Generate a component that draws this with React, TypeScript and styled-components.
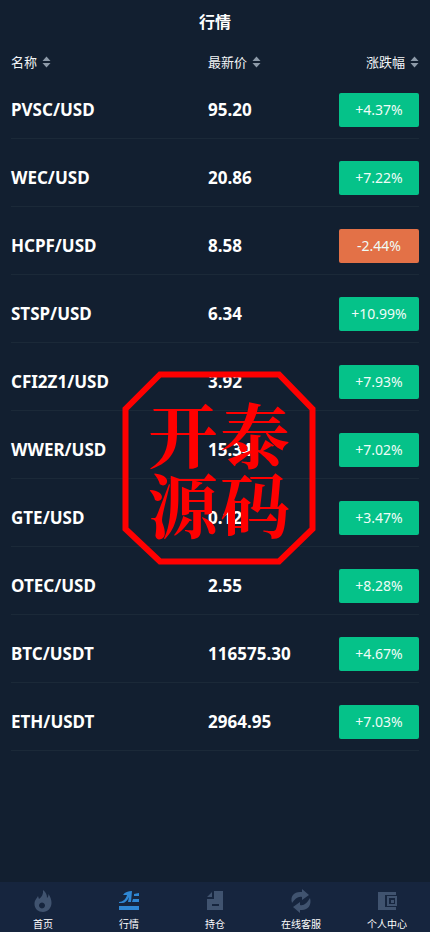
import React from "react";
import styled, { createGlobalStyle } from "styled-components";

const GlobalStyle = createGlobalStyle`
  * { box-sizing: border-box; }
  body {
    margin: 0;
    background: #121f30;
    color: #fff;
    font-family: "Noto Sans", "Noto Sans CJK SC", sans-serif;
  }
`;

const Page = styled.div`
  position: relative;
  display: flex;
  flex-direction: column;
  min-height: 100vh;
`;

const Header = styled.header`
  display: flex;
  align-items: center;
  justify-content: center;
  height: 44px;
`;

const Title = styled.h1`
  margin: 0;
  font-size: 16px;
  line-height: 24px;
  font-weight: 700;
`;

const Main = styled.main`
  flex: 1;
  padding: 0 11px;
`;

const Table = styled.table`
  width: 100%;
  table-layout: fixed;
  border-spacing: 0;
`;

const HeadCell = styled.th<{ $width: string }>`
  width: ${(p) => p.$width};
  padding: 9px 0 0;
`;

const SortButton = styled.button<{ $end?: boolean }>`
  display: flex;
  align-items: center;
  gap: 5px;
  height: 18px;
  margin-left: ${(p) => (p.$end ? "auto" : "0")};
  padding: 0;
  border: 0;
  background: none;
  color: #f3f5f7;
  font: inherit;
  font-weight: 400;
  font-size: 13px;
  line-height: 18px;
`;

const Cell = styled.td<{ $end?: boolean }>`
  padding: 22px 0 11px;
  border-bottom: 1px solid #1b2938;
  font-size: 17px;
  line-height: 34px;
  font-weight: 700;
  text-align: ${(p) => (p.$end ? "right" : "left")};
`;

const Change = styled.span<{ $down: boolean }>`
  display: block;
  width: 80px;
  height: 34px;
  margin-left: auto;
  border-radius: 2px;
  background: ${(p) => (p.$down ? "#e37147" : "#05c289")};
  color: #effcf7;
  font-size: 14px;
  font-weight: 400;
  text-align: center;
`;

const Nav = styled.nav`
  position: sticky;
  bottom: 0;
  display: flex;
  height: 50px;
  background: #16253e;
`;

const NavLink = styled.a<{ $active?: boolean }>`
  flex: 1;
  display: flex;
  flex-direction: column;
  align-items: center;
  gap: 3px;
  padding-top: 7px;
  color: #fff;
  font-size: 10px;
  line-height: 16px;
  text-decoration: none;

  svg {
    color: ${(p) => (p.$active ? "#2f87d3" : "#40536f")};
  }
`;

const Stamp = styled.div`
  position: absolute;
  top: 371px;
  left: calc(50% - 93px);
  display: grid;
  place-items: center;
  width: 194px;
  height: 194px;
  color: #f00;
  pointer-events: none;

  svg { position: absolute; inset: 0; }
`;

const StampText = styled.div`
  display: grid;
  grid-template-columns: 72px 72px;
  font-family: "Noto Serif CJK SC", "Noto Sans CJK SC", serif;
  font-size: 70px;
  line-height: 70px;
  font-weight: 700;
  text-align: center;
`;

const SortIcon = () => (
  <svg width="9" height="12" viewBox="0 0 9 12" fill="#8d9aa8" aria-hidden="true">
    <path d="M4.500 .5 8.500 5H.5zM.5 7h8l-4 4.500z" />
  </svg>
);

const icons = {
  home: (
    <path d="M12 1c3 2 4 5 4 8 1-1 1.500-2 1.500-4 2 3 3 6 3 9 0 5-4 9-8.500 9s-8.500-3-8.500-8c0-4 2-5 3.500-8 .5 1 .5 2 1 3 3-2 4.500-5 4-9zM11 13.500a3 3 0 1 0 .01 0z" fillRule="evenodd" />
  ),
  market: (
    <>
      <path d="M2 13c4 0 7-3 8-7H6c2-3 5-4 9-4l-1 11h-3l1-5c-2 4-4 6-7 6H2z" />
      <path d="M17 5l5-1v3h-5zM16 10h6v3h-7zM2 17h20v4H2z" />
    </>
  ),
  hold: (
    <path d="M11 2h9v19H4V10h7zM9 3v5H4zM9 15v2h7v-2z" fillRule="evenodd" />
  ),
  service: (
    <>
      <path d="M3 14C1 7 5 3 11 3h2V0l7 6-7 5V8c-4-1-7 2-10 6z" />
      <path d="M21 9c2 7-2 12-8 12h-2v3l-7-6 7-5v3c4 1 7-2 10-7z" />
    </>
  ),
  profile: (
    <path d="M3 3h18v3H10v12h11v3H3zM12 7h10v10H12zM14 9v6h6V9zM16 11h3v3h-3z" fillRule="evenodd" />
  ),
};

const tabs: { label: string; icon: keyof typeof icons }[] = [
  { label: "首页", icon: "home" },
  { label: "行情", icon: "market" },
  { label: "持仓", icon: "hold" },
  { label: "在线客服", icon: "service" },
  { label: "个人中心", icon: "profile" },
];

const quotes = [
  ["PVSC/USD", "95.20", "+4.37%"],
  ["WEC/USD", "20.86", "+7.22%"],
  ["HCPF/USD", "8.58", "-2.44%"],
  ["STSP/USD", "6.34", "+10.99%"],
  ["CFI2Z1/USD", "3.92", "+7.93%"],
  ["WWER/USD", "15.34", "+7.02%"],
  ["GTE/USD", "0.12", "+3.47%"],
  ["OTEC/USD", "2.55", "+8.28%"],
  ["BTC/USDT", "116575.30", "+4.67%"],
  ["ETH/USDT", "2964.95", "+7.03%"],
];

export default function App() {
  return (
    <Page>
      <GlobalStyle />
      <Header>
        <Title>行情</Title>
      </Header>
      <Main>
        <Table>
          <thead>
            <tr>
              <HeadCell $width="48.3%">
                <SortButton type="button">名称<SortIcon /></SortButton>
              </HeadCell>
              <HeadCell $width="28%">
                <SortButton type="button">最新价<SortIcon /></SortButton>
              </HeadCell>
              <HeadCell $width="23.7%">
                <SortButton type="button" $end>涨跌幅<SortIcon /></SortButton>
              </HeadCell>
            </tr>
          </thead>
          <tbody>
            {quotes.map(([name, price, change]) => (
              <tr key={name}>
                <Cell>{name}</Cell>
                <Cell>{price}</Cell>
                <Cell $end>
                  <Change $down={change.startsWith("-")}>{change}</Change>
                </Cell>
              </tr>
            ))}
          </tbody>
        </Table>
      </Main>
      <Stamp>
        <svg viewBox="0 0 194 194" fill="none" stroke="currentColor" strokeWidth="6" aria-hidden="true">
          <path d="M38 3.500H157L190.500 38V158L157 190.500H38L3.500 158V38z" />
        </svg>
        <StampText>
          <span>开</span>
          <span>泰</span>
          <span>源</span>
          <span>码</span>
        </StampText>
      </Stamp>
      <Nav>
        {tabs.map(({ label, icon }) => (
          <NavLink key={label} href="#" $active={icon === "market"}>
            <svg width="24" height="24" viewBox="0 0 24 24" fill="currentColor" aria-hidden="true">
              {icons[icon]}
            </svg>
            {label}
          </NavLink>
        ))}
      </Nav>
    </Page>
  );
}
